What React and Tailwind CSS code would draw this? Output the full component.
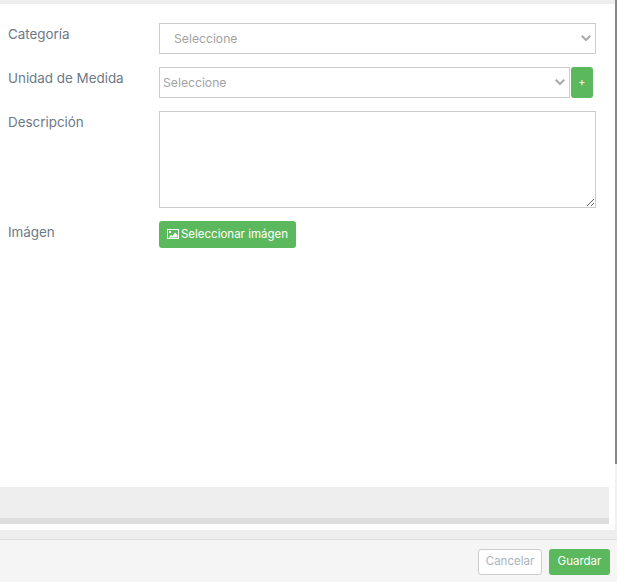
import React from "react";

function Row({ label, children, className }) {
  return (
    <div className={"flex " + className}>
      <label className="w-[159px] shrink-0 pl-2 pt-px text-[13.4px] leading-5 text-[#6d7986]">{label}</label>
      {children}
    </div>
  );
}

function Select({ className, textClass }) {
  return (
    <div className={"relative flex h-[31px] items-center border border-[#ccc] bg-white " + className}>
      <span className={"pt-[2px] text-[12.2px] text-[#a3a3a3] " + textClass}>Seleccione</span>
      <svg viewBox="0 0 10 6" className="absolute right-[4px] top-[11px] h-[6px] w-[10px] text-[#aaa]" fill="none" stroke="currentColor" strokeWidth="2">
        <path d="M0.7 0.7L5 5L9.3 0.7" />
      </svg>
    </div>
  );
}

export default function App() {
  return (
    <div className="flex h-[582px] w-[617px] flex-col overflow-hidden bg-white font-['Inter',sans-serif]">
      <div className="flex h-[530px]">
        <div className="flex min-w-0 flex-1 flex-col">
          <div className="h-1 bg-[#eee]"></div>
          <div className="flex-1 pt-[19px] pr-[19px]">
            <Row className="mb-[13px]" label="Categoría">
              <Select className="w-[437px]" textClass="pl-[14px]" />
            </Row>
            <Row className="mb-[13px]" label="Unidad de Medida">
              <Select className="w-[411px]" textClass="pl-[3px]" />
              <button className="ml-px flex h-[31px] w-[22px] items-center justify-center rounded-[3px] bg-[#5cb85c] text-[11px] text-white">+</button>
            </Row>
            <Row className="mb-[13px]" label="Descripción">
              <textarea className="h-[97px] w-[437px] border border-[#ccc] bg-white"></textarea>
            </Row>
            <Row label="Imágen">
              <button className="flex h-[27px] w-[137px] items-center justify-center gap-[2px] rounded-[3px] bg-[#5cb85c] text-[11.5px] text-white">
                <svg viewBox="0 0 12 10" className="-mt-px h-[10px] w-[12px]">
                  <rect width="12" height="10" fill="#fff" />
                  <rect x="1" y="1" width="10" height="8" fill="#5cb85c" />
                  <circle cx="3" cy="3" r="1.2" fill="#fff" />
                  <path d="M1.5 8.5L4 6L5.5 7L8 3.5L10.5 6V8.5Z" fill="#fff" />
                </svg>
                Seleccionar imágen
              </button>
            </Row>
          </div>
          <div className="mr-[6px]">
            <div className="h-[31px] bg-[#eee]"></div>
            <div className="h-[6px] bg-[#ddd]"></div>
          </div>
          <div className="h-[6px] bg-[#fcfcfc]"></div>
        </div>
        <div className="flex w-[2px] flex-col bg-[#f1f1f1]">
          <div className="h-[464px] bg-[#888]"></div>
        </div>
      </div>
      <div className="h-[9px] bg-[#eee]"></div>
      <div className="flex h-[43px] items-start justify-end gap-[7px] border-t border-[#ddd] bg-[#f5f5f5] pt-[9px] pr-[7px]">
        <button className="h-[26px] w-[64px] rounded-[3px] border border-[#ccc] bg-white text-[11.5px] text-[#aab4be]">Cancelar</button>
        <button className="h-[26px] w-[61px] rounded-[3px] bg-[#5cb85c] text-[11.5px] text-white">Guardar</button>
      </div>
    </div>
  );
}
